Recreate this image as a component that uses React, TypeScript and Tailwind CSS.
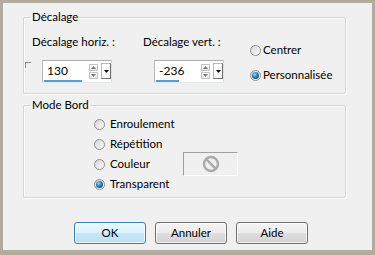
import React from "react";

const font = { fontFamily: 'Lato, "Noto Sans", sans-serif' };

function Radio({ checked }: { checked?: boolean }) {
  return (
    <span className="flex w-[11px] h-[11px] shrink-0 items-center justify-center rounded-full border border-[#8e8f8f] bg-[linear-gradient(135deg,#d6d6d6,#fbfbfb)]">
      {checked && (
        <span className="w-[7px] h-[7px] rounded-full bg-[radial-gradient(circle_at_40%_35%,#9fd6f2_0%,#2a7bb0_45%,#0b3c60_100%)]" />
      )}
    </span>
  );
}

function UpArrow() {
  return (
    <svg width="5" height="3" viewBox="0 0 5 3">
      <path d="M0 3 L2.5 0 L5 3 Z" fill="#7a7a7a" />
    </svg>
  );
}
function DownArrow({ color = "#7a7a7a" }: { color?: string }) {
  return (
    <svg width="5" height="3" viewBox="0 0 5 3">
      <path d="M0 0 L2.5 3 L5 0 Z" fill={color} />
    </svg>
  );
}

function SpinField({ value, underline }: { value: string; underline: string }) {
  return (
    <div className="flex w-[70px] h-[23px] border border-t-[#abadb3] border-l-[#b5b8bf] border-r-[#dbdfe6] border-b-[#e3e9ef] bg-white">
      <div className="flex flex-col w-[45px]">
        <div className="mt-[2px] h-4 leading-4 pl-[4px] text-[12px] text-black">{value}</div>
        <div className={`mt-[1px] ml-[1px] h-[2px] bg-[#5d9ccf] ${underline}`} />
      </div>
      <div className="ml-[1px] mt-[3px] flex flex-col gap-[1px] w-[9px]">
        <div className="flex h-[7px] items-center justify-center border border-[#c5c5c5] bg-[linear-gradient(#ffffff,#e6e6e6)]">
          <UpArrow />
        </div>
        <div className="flex h-[7px] items-center justify-center border border-[#c5c5c5] bg-[linear-gradient(#ffffff,#e6e6e6)]">
          <DownArrow />
        </div>
      </div>
      <div className="ml-[3px] mt-[2px] flex h-[16px] w-[10px] items-center justify-center border border-[#b8b8b8] border-r-[#6e6e6e] border-b-[#6e6e6e] bg-[#fbfbfb]">
        <DownArrow color="#000" />
      </div>
    </div>
  );
}

function Group({
  title,
  className,
  children,
}: {
  title: string;
  className: string;
  children: React.ReactNode;
}) {
  return (
    <div
      className={`ml-[20px] w-[323px] flex flex-col border border-[#d5d5d5] rounded-[2px] shadow-[inset_1px_1px_0_#ffffff,1px_1px_0_#ffffff] ${className}`}
    >
      <span className="-mt-[9px] ml-[7px] self-start h-4 leading-4 px-[1px] bg-[#f0f0f0] text-[11.5px] text-black">
        {title}
      </span>
      {children}
    </div>
  );
}

function Button({ label, primary }: { label: string; primary?: boolean }) {
  return (
    <button
      className={
        primary
          ? "w-[72px] h-[22px] rounded-[3px] border border-[#3c7fb1] bg-[linear-gradient(#edf8fd_0%,#dcf1fb_50%,#c8e7f7_51%,#b9e0f5_100%)] shadow-[inset_0_0_0_1px_rgba(255,255,255,0.7)] text-[11.5px] text-black"
          : "w-[72px] h-[22px] rounded-[3px] border border-[#707070] bg-[linear-gradient(#f4f4f4_0%,#ececec_50%,#dfdfdf_51%,#d2d2d2_100%)] shadow-[inset_0_0_0_1px_rgba(255,255,255,0.7)] text-[11.5px] text-black"
      }
    >
      {label}
    </button>
  );
}

export default function App() {
  return (
    <div className="w-[375px] h-[255px] bg-[#b3ab9c] pt-[3px] pl-[3px] pr-[3px] pb-[5px]" style={font}>
      <div className="w-[369px] h-[247px] bg-[#f0f0f0] flex flex-col">
        <Group title="Décalage" className="mt-[14px] h-[77px]">
          <div className="mt-[9px] flex">
            <div className="w-[119px] flex flex-col">
              <div className="pl-[8px] h-4 leading-4 text-[11.5px] text-black">Décalage horiz. :</div>
              <div className="mt-[10px] flex">
                <div className="ml-[1px] mt-[2px] w-[6px] h-[6px] border-l border-t border-[#8a8a8a]" />
                <div className="ml-[11px]">
                  <SpinField value="130" underline="w-[38px]" />
                </div>
              </div>
            </div>
            <div className="w-[107px] flex flex-col">
              <div className="h-4 leading-4 text-[11.5px] text-black">Décalage vert. :</div>
              <div className="mt-[10px] ml-[11px]">
                <SpinField value="-236" underline="w-[23px]" />
              </div>
            </div>
            <div className="flex flex-col">
              <div className="mt-[6px] h-5 flex items-center">
                <Radio />
                <span className="ml-[2px] text-[11.5px] text-black leading-4">Centrer</span>
              </div>
              <div className="mt-[5px] h-5 flex items-center">
                <Radio checked />
                <span className="ml-[2px] text-[11.5px] text-black leading-4">Personnalisée</span>
              </div>
            </div>
          </div>
        </Group>

        <Group title="Mode Bord" className="mt-[11px] h-[93px]">
          <div className="mt-[1px] ml-[70px] flex flex-col">
            <div className="h-5 flex items-center">
              <Radio />
              <span className="ml-[5px] text-[11.5px] text-black leading-4">Enroulement</span>
            </div>
            <div className="h-5 flex items-center">
              <Radio />
              <span className="ml-[5px] text-[11.5px] text-black leading-4">Répétition</span>
            </div>
            <div className="h-5 flex items-center">
              <Radio />
              <span className="ml-[5px] w-[73px] text-[11.5px] text-black leading-4">Couleur</span>
              <div className="flex w-[55px] h-[24px] shrink-0 items-center justify-center border border-t-[#a0a0a0] border-l-[#a0a0a0] border-r-white border-b-white">
                <svg width="18" height="18" viewBox="0 0 18 18">
                  <circle cx="9" cy="9" r="7" fill="none" stroke="#aaaaaa" strokeWidth="2.4" />
                  <line x1="4.2" y1="4.2" x2="13.8" y2="13.8" stroke="#aaaaaa" strokeWidth="2.4" />
                </svg>
              </div>
            </div>
            <div className="h-5 flex items-center">
              <Radio checked />
              <span className="ml-[5px] text-[11.5px] text-black leading-4">Transparent</span>
            </div>
          </div>
        </Group>

        <div className="mt-[24px] ml-[71px] flex gap-[9px]">
          <Button label="OK" primary />
          <Button label="Annuler" />
          <Button label="Aide" />
        </div>
      </div>
    </div>
  );
}
